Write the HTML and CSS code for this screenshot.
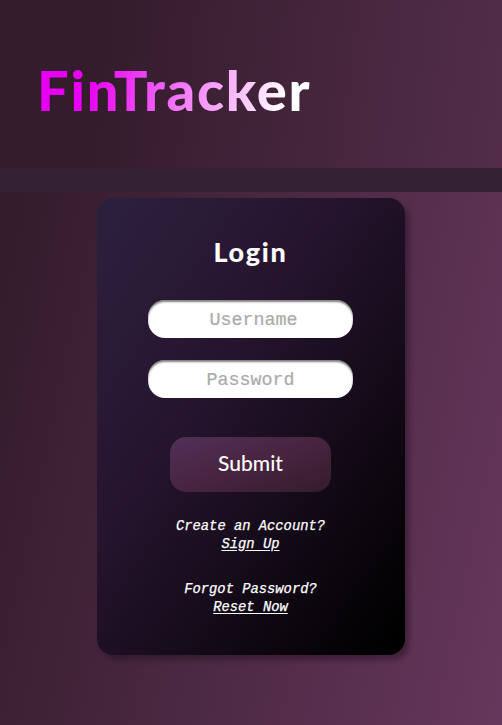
FILE: index.html
```html
<!DOCTYPE html>
<html lang="en">
<head>
<meta charset="utf-8">
<title>FinTracker</title>
<link rel="stylesheet" href="styles.css">
</head>
<body>
<header class="header"><h1 class="logo">FinTracker</h1></header>
<div class="band"></div>
<main class="main">
<form class="card">
<h2 class="title">Login</h2>
<input class="field username" type="text" placeholder="Username" aria-label="Username">
<input class="field" type="password" placeholder="Password" aria-label="Password">
<button class="submit" type="button">Submit</button>
<p class="note">Create an Account?<br><a class="link" href="#">Sign Up</a></p>
<p class="note">Forgot Password?<br><a class="link" href="#">Reset Now</a></p>
</form>
</main>
</body>
</html>
```
FILE: styles.css
```css
* { box-sizing: border-box; }
body {
  margin: 0;
  height: 725px;
  display: flex;
  flex-direction: column;
  overflow: hidden;
  background: #341c2c;
  font-family: Lato, sans-serif;
  color: #fff;
}
.header {
  height: 168px;
  padding: 56px 0 0 37px;
  background: linear-gradient(97deg, #341c2c 20%, #532d4a);
}
.logo {
  margin: 0;
  width: 278px;
  font-size: 56px;
  line-height: 68px;
  font-weight: 900;
  letter-spacing: 1.8px;
  font-kerning: normal;
  white-space: nowrap;
  background: linear-gradient(105deg, #e800f4 20%, #fff 88%);
  -webkit-background-clip: text;
  background-clip: text;
  color: transparent;
}
.band {
  height: 23.5px;
  background: #332233;
}
.main {
  flex: 1;
  padding: 6px 0 0 96.5px;
  background: linear-gradient(102deg, #341c2c 3%, #66375c);
}
.card {
  width: 308px;
  height: 457px;
  display: flex;
  flex-direction: column;
  align-items: center;
  border-radius: 16px;
  background: linear-gradient(125deg, #2c1f3c 5%, #26142e 38%, #000 97%);
  box-shadow: 4px 5px 5px rgba(40, 18, 38, .5);
}
.title {
  margin: 37px 0 31px;
  font-size: 27px;
  line-height: 34px;
  font-weight: 900;
  letter-spacing: 1.7px;
}
.field {
  width: 205px;
  height: 38px;
  margin: 0 0 22px;
  padding: 3px 0 0;
  border: 0;
  border-radius: 17px;
  background: #fff;
  box-shadow: inset 0 2px 2px rgba(0, 0, 0, .5);
  font: 18.33px "Liberation Mono", monospace;
  text-align: center;
}
.username { padding-left: 6px; }
.field::placeholder { color: #aaa; opacity: 1; -webkit-text-stroke: .2px #aaa; }
.submit {
  width: 161px;
  height: 55px;
  margin: 17px 0 26px;
  padding: 0 0 4px;
  border: 0;
  border-radius: 16px;
  background: linear-gradient(160deg, #523059, #482440 50%, #341c2c);
  font: 500 21px Lato, sans-serif;
  color: #fff;
}
.note {
  margin: 0 0 27px;
  font: italic 13.8px/18px "Liberation Mono", monospace;
  -webkit-text-stroke: .25px #fff;
  text-align: center;
}
.link { color: inherit; text-underline-offset: 2px; }
```
